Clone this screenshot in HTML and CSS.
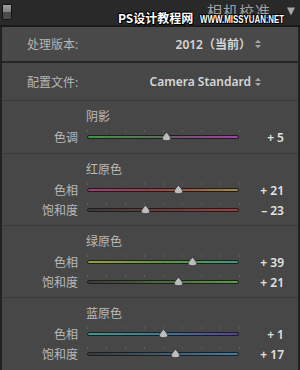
FILE: index.html
```html
<!DOCTYPE html>
<html lang="zh">
<head>
<meta charset="utf-8">
<link rel="stylesheet" href="styles.css">
</head>
<body>
<div class="app">
  <header class="head">
    <span class="toggle"><span class="toggle-top"></span></span>
    <span class="title">相机校准</span>
    <svg class="caret" viewBox="0 0 8 9"><polygon points="0,0.5 8,0.5 4,8.5" fill="#a8a8a8"/></svg>
    <span class="wm wm-cn">PS设计教程网</span>
    <span class="wm wm-en">WWW.MISSYUAN.NET</span>
  </header>
  <section class="panel">
    <div class="row row-process">
      <span class="row-label">处理版本:</span>
      <span class="row-value"><span>2012（当前）</span><svg class="updown" viewBox="0 0 6 10"><polygon points="0,4 3,0.8 6,4" fill="#a4a4a4"/><polygon points="0,6 3,9.2 6,6" fill="#a4a4a4"/></svg></span>
    </div>
    <div class="row row-profile">
      <span class="row-label">配置文件:</span>
      <span class="row-value"><span>Camera Standard</span><svg class="updown" viewBox="0 0 6 10"><polygon points="0,4 3,0.8 6,4" fill="#a4a4a4"/><polygon points="0,6 3,9.2 6,6" fill="#a4a4a4"/></svg></span>
    </div>

    <div class="group group-first">
      <div class="g-title">阴影</div>
      <div class="slider">
        <span class="s-label">色调</span>
        <span class="track tint"><span class="thumb" style="left:52.5%"><svg viewBox="0 0 9 9"><path class="thumb-shape" d="M4.5 0.4C5.6 1.6 8.6 4.4 8.6 6.5C8.6 8 7 8.6 4.5 8.6C2 8.6 0.4 8 0.4 6.5C0.4 4.4 3.4 1.6 4.5 0.4Z"/></svg></span></span>
        <span class="s-value">+ 5</span>
      </div>
    </div>

    <div class="group">
      <div class="g-title">红原色</div>
      <div class="slider">
        <span class="s-label">色相</span>
        <span class="track red-hue"><span class="thumb" style="left:60.5%"><svg viewBox="0 0 9 9"><path class="thumb-shape" d="M4.5 0.4C5.6 1.6 8.6 4.4 8.6 6.5C8.6 8 7 8.6 4.5 8.6C2 8.6 0.4 8 0.4 6.5C0.4 4.4 3.4 1.6 4.5 0.4Z"/></svg></span></span>
        <span class="s-value">+ 21</span>
      </div>
      <div class="slider">
        <span class="s-label">饱和度</span>
        <span class="track red-sat"><span class="thumb" style="left:38.5%"><svg viewBox="0 0 9 9"><path class="thumb-shape" d="M4.5 0.4C5.6 1.6 8.6 4.4 8.6 6.5C8.6 8 7 8.6 4.5 8.6C2 8.6 0.4 8 0.4 6.5C0.4 4.4 3.4 1.6 4.5 0.4Z"/></svg></span></span>
        <span class="s-value">– 23</span>
      </div>
    </div>

    <div class="group">
      <div class="g-title">绿原色</div>
      <div class="slider">
        <span class="s-label">色相</span>
        <span class="track green-hue"><span class="thumb" style="left:69.5%"><svg viewBox="0 0 9 9"><path class="thumb-shape" d="M4.5 0.4C5.6 1.6 8.6 4.4 8.6 6.5C8.6 8 7 8.6 4.5 8.6C2 8.6 0.4 8 0.4 6.5C0.4 4.4 3.4 1.6 4.5 0.4Z"/></svg></span></span>
        <span class="s-value">+ 39</span>
      </div>
      <div class="slider">
        <span class="s-label">饱和度</span>
        <span class="track green-sat"><span class="thumb" style="left:60.5%"><svg viewBox="0 0 9 9"><path class="thumb-shape" d="M4.5 0.4C5.6 1.6 8.6 4.4 8.6 6.5C8.6 8 7 8.6 4.5 8.6C2 8.6 0.4 8 0.4 6.5C0.4 4.4 3.4 1.6 4.5 0.4Z"/></svg></span></span>
        <span class="s-value">+ 21</span>
      </div>
    </div>

    <div class="group">
      <div class="g-title">蓝原色</div>
      <div class="slider">
        <span class="s-label">色相</span>
        <span class="track blue-hue"><span class="thumb" style="left:50.5%"><svg viewBox="0 0 9 9"><path class="thumb-shape" d="M4.5 0.4C5.6 1.6 8.6 4.4 8.6 6.5C8.6 8 7 8.6 4.5 8.6C2 8.6 0.4 8 0.4 6.5C0.4 4.4 3.4 1.6 4.5 0.4Z"/></svg></span></span>
        <span class="s-value">+ 1</span>
      </div>
      <div class="slider">
        <span class="s-label">饱和度</span>
        <span class="track blue-sat"><span class="thumb" style="left:58.5%"><svg viewBox="0 0 9 9"><path class="thumb-shape" d="M4.5 0.4C5.6 1.6 8.6 4.4 8.6 6.5C8.6 8 7 8.6 4.5 8.6C2 8.6 0.4 8 0.4 6.5C0.4 4.4 3.4 1.6 4.5 0.4Z"/></svg></span></span>
        <span class="s-value">+ 17</span>
      </div>
    </div>
  </section>
</div>
</body>
</html>
```
FILE: styles.css
```css
* { box-sizing: border-box; margin: 0; padding: 0; }
html, body { width: 300px; height: 370px; overflow: hidden; }
body {
  background: #474747;
  font-family: "Noto Sans", "Noto Sans CJK SC", sans-serif;
  font-size: 12px;
  color: #b9b9b9;
}
.app { width: 300px; height: 370px; display: flex; flex-direction: column; }

/* header */
.head {
  position: relative;
  height: 27px;
  flex: none;
  background: #292929;
  border-bottom: 2px solid #1a1a1a;
  display: flex;
  align-items: flex-start;
}
.toggle {
  margin: 4px 0 0 2px;
  width: 10px;
  height: 16px;
  border: 1px solid #141414;
  border-radius: 2px;
  background: #4b4b4b;
  display: flex;
  flex-direction: column;
}
.toggle-top { height: 7px; background: linear-gradient(#a0a0a0, #7c7c7c); }
.title {
  margin: 3px 0 0 auto;
  font-family: "Noto Sans CJK SC", sans-serif;
  font-size: 15px;
  line-height: 15px;
  letter-spacing: 1px;
  color: #a0a0a0;
}
.caret { margin: 7px 5px 0 16px; width: 8px; height: 9px; }
.wm {
  position: absolute;
  color: #fff;
  font-weight: 700;
  white-space: nowrap;
  text-shadow: 1px 0 #000, -1px 0 #000, 0 1px #000, 0 -1px #000, 1px 1px #000, -1px -1px #000;
}
.wm-cn {
  left: 118px; top: 12px;
  font-family: "Noto Sans CJK SC", sans-serif;
  font-size: 12px; line-height: 12px;
}
.wm-en {
  left: 200px; top: 14px;
  font-family: "Liberation Sans", sans-serif;
  font-size: 11px; line-height: 11px;
  transform: scaleX(0.72);
  transform-origin: 0 0;
}

/* panel */
.panel {
  flex: 1;
  background: #474747;
  border-left: 2px solid #222;
  border-right: 2px solid #222;
}
.row {
  display: flex;
  align-items: center;
  justify-content: space-between;
  padding: 0 37px 0 25px;
}
.row-process { height: 36px; border-bottom: 2px solid #262626; background: #494949; }
.row-profile { height: 38px; border-bottom: 1px solid #3b3b3b; }
.row-label { color: #b6b6b6; }
.row-value { display: flex; align-items: center; gap: 4px; color: #d6d6d6; font-weight: 600; }
.updown { width: 6px; height: 10px; }

.group { padding: 6px 0 5px; border-bottom: 1px solid #3b3b3b; }
.group-first { padding-bottom: 6px; }
.group:last-child { border-bottom: 0; }
.g-title { height: 20px; line-height: 20px; padding-left: 84px; color: #bababa; }
.slider {
  display: grid;
  grid-template-columns: 85px 152px 45px;
  height: 20px;
  align-items: center;
}
.s-label { text-align: right; padding-right: 9px; color: #b9b9b9; }
.s-value { text-align: right; font-weight: 600; color: #e2e2e2; white-space: pre; }

.track {
  position: relative;
  display: block;
  height: 4px;
  border: 1px solid #1e1e1e;
  border-radius: 2px;
}
.track::before {
  content: "";
  position: absolute;
  left: -1px;
  top: -6px;
  width: 153px;
  height: 2px;
  background: linear-gradient(to right, #5e5e5e 1px, transparent 1px) 0 0 / 19px 2px repeat-x;
}
.thumb {
  position: absolute;
  top: -4px;
  width: 9px;
  height: 9px;
  margin-left: -4.5px;
}
.thumb svg { display: block; width: 9px; height: 9px; }
.thumb-shape { fill: #bdbdbd; stroke: #2a2a2a; stroke-width: 0.6; }

.tint { background: linear-gradient(to right, #3c9c3c, #5e6e5e 48%, #6c5a6c 54%, #aa3caa); }
.red-hue { background: linear-gradient(to right, #a03c72, #a03c48 40%, #a0583c 68%, #a08c40); }
.red-sat { background: linear-gradient(to right, #3a3a3a, #a83a3a); }
.green-hue { background: linear-gradient(to right, #9a9c3c, #5a9a3c 50%, #3a9a7e); }
.green-sat { background: linear-gradient(to right, #3a3a3a, #5aa03c); }
.blue-hue { background: linear-gradient(to right, #3a9a8a, #3a7a9c 50%, #5a3ca2); }
.blue-sat { background: linear-gradient(to right, #3a3a3a, #3a80aa); }
```
